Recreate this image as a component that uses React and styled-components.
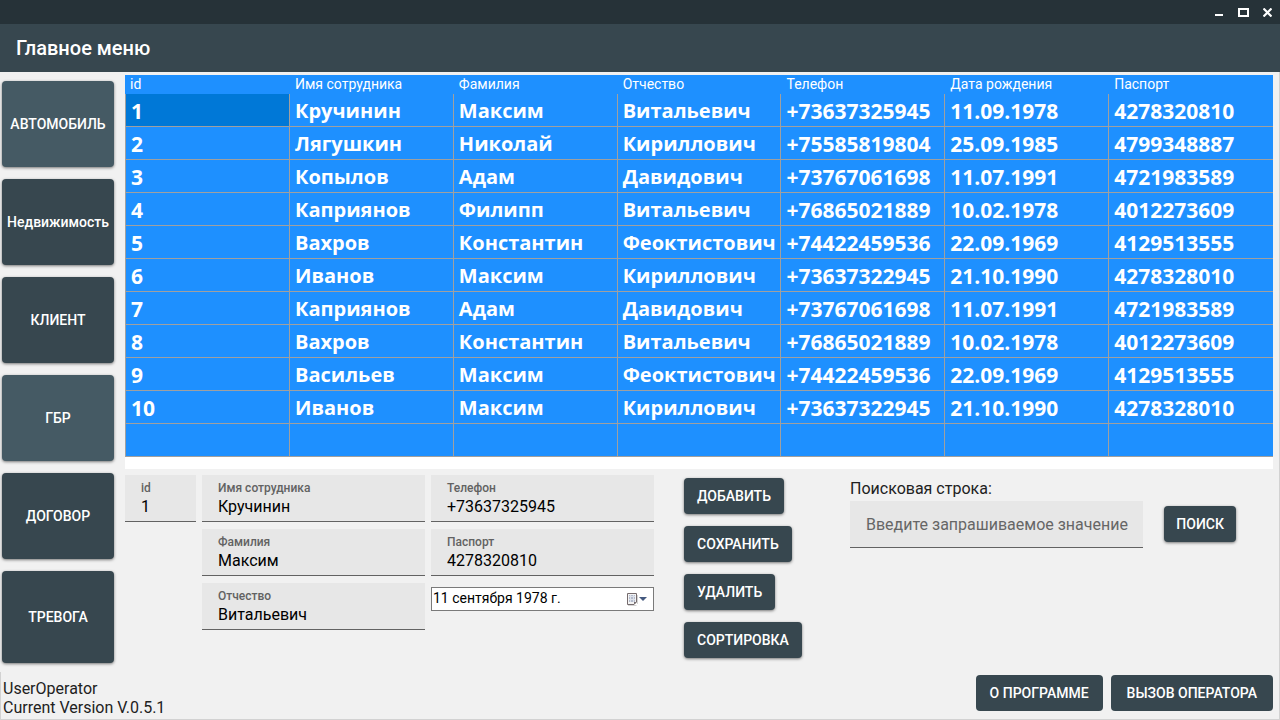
import React, { useState } from "react";
import styled, { createGlobalStyle } from "styled-components";

const GlobalStyle = createGlobalStyle`
  * { box-sizing: border-box; }
  body {
    margin: 0;
    background: #f1f1f1;
    color: #212121;
    font-family: Roboto, "Liberation Sans", sans-serif;
    font-size: 16px;
  }
  button, input { font-family: inherit; }
`;

const Window = styled.div`
  display: flex;
  flex-direction: column;
  min-height: 100vh;
  border-bottom: 1px solid #d2d2d2;
`;

const TitleBar = styled.div`
  display: flex;
  justify-content: flex-end;
  height: 24px;
  padding-right: 1px;
  background: #263238;
`;

const WindowButton = styled.button`
  display: flex;
  align-items: center;
  justify-content: center;
  width: 24px;
  height: 24px;
  padding: 0;
  border: 0;
  background: none;
  color: #fff;
`;

const AppBar = styled.header`
  display: flex;
  align-items: center;
  height: 48px;
  padding: 0 16px;
  background: #37474f;
`;

const Title = styled.h1`
  margin: 0;
  color: #fff;
  font-size: 20px;
  font-weight: 500;
  line-height: 24px;
`;

const Body = styled.div`
  display: flex;
  flex: 1;
  border-right: 1px solid #d2d2d2;
`;

const Sidebar = styled.nav`
  display: flex;
  flex-direction: column;
  flex: none;
  gap: 12px;
  width: 125px;
  padding: 9px 11px 0 2px;
`;

const Button = styled.button`
  height: 36px;
  padding: 0 ${(p) => p.$pad ?? 12}px;
  border: 0;
  border-radius: 4px;
  background: ${(p) => (p.$light ? "#455a64" : "#37474f")};
  box-shadow: ${(p) => (p.$flat ? "none" : "0 1px 3px rgba(0, 0, 0, 0.5)")};
  color: #fff;
  font-size: 14px;
  font-weight: 500;
  line-height: 20px;
  white-space: nowrap;
`;

const NavButton = styled(Button)`
  height: ${(p) => (p.$tall ? 92 : 86)}px;
  padding: 0;
`;

const Content = styled.main`
  flex: 1;
  min-width: 0;
  padding: 3px 6px 0 0;
`;

const TablePanel = styled.div`
  padding-bottom: 12px;
  background: #fff;
`;

const Table = styled.table`
  width: 100%;
  border-collapse: separate;
  border-spacing: 0;
  table-layout: fixed;
  background: #1e90ff;
  color: #fff;
`;

const HeadCell = styled.th`
  height: 19px;
  padding: 0 5px;
  font-size: 14px;
  font-weight: 400;
  line-height: 19px;
  text-align: left;

  &:first-child { width: 165px; }
`;

const Cell = styled.td`
  height: 33px;
  padding: 2px 0 0 5px;
  border: solid #a0a0a0;
  border-width: 0 1px 1px 0;
  background: ${(p) => (p.$selected ? "#0078d7" : "transparent")};
  font-family: "Open Sans", "Noto Sans", sans-serif;
  font-size: ${(p) => (p.$numeric ? 21 : 20)}px;
  font-weight: 700;
  line-height: 30px;
  white-space: nowrap;

  &:first-child { border-left-width: 1px; }
  &:last-child { border-right-width: 0; }
`;

const Lower = styled.div`
  display: grid;
  grid-template-columns: 529fr 136fr 423fr;
  column-gap: 30px;
  align-items: start;
  padding-top: 6px;
`;

const Form = styled.form`
  display: grid;
  grid-template-columns: 71px minmax(0, 1fr) minmax(0, 1fr);
  gap: 6px;
`;

const FormColumn = styled.div`
  display: flex;
  flex-direction: column;
  gap: 7px;
`;

const FieldBox = styled.div`
  display: flex;
  flex-direction: column;
  height: 47px;
  padding: 5px 0 0 16px;
  border-bottom: 1px solid #626262;
  background: #e7e7e7;
`;

const FieldLabel = styled.label`
  color: #626262;
  font-size: 12px;
  font-weight: 500;
  line-height: 16px;
`;

const FieldInput = styled.input`
  width: 100%;
  height: 20px;
  padding: 0;
  border: 0;
  outline: 0;
  background: none;
  color: #000;
  font-size: 16px;

  &::placeholder { color: #666; opacity: 1; }
`;

const DateBox = styled.div`
  display: flex;
  align-items: center;
  height: 24px;
  margin-top: 4px;
  padding: 0 6px 0 1px;
  border: 1px solid #7a7a7a;
  background: #fff;
`;

const DateInput = styled(FieldInput)`
  flex: 1;
  min-width: 0;
  height: 22px;
  padding-bottom: 2px;
  font-size: 14px;
`;

const DateButton = styled.button`
  display: flex;
  padding: 0;
  border: 0;
  background: none;
`;

const Actions = styled.div`
  display: flex;
  flex-direction: column;
  align-items: flex-start;
  gap: 12px;
  padding-top: 3px;
`;

const Search = styled.form`
  padding: 4px 37px 0 0;
`;

const SearchLabel = styled.label`
  display: block;
  padding-bottom: 2px;
  line-height: 20px;
`;

const SearchRow = styled.div`
  display: flex;
  align-items: flex-start;
  gap: 21px;
`;

const SearchBox = styled(FieldBox)`
  flex: 1;
  justify-content: center;
  min-width: 0;
  padding-top: 0;
`;

const SearchButton = styled(Button)`
  margin-top: 5px;
`;

const Footer = styled.footer`
  display: flex;
  align-items: flex-end;
  justify-content: space-between;
  padding: 3px 6px 2px 2px;
  border: solid #d2d2d2;
  border-width: 0 1px;
`;

const Version = styled.p`
  margin: 0;
  line-height: 19px;
`;

const FooterButtons = styled.div`
  display: flex;
  gap: 8px;
  padding-bottom: 6px;
`;

const navItems = [
  { label: "АВТОМОБИЛЬ", light: true },
  { label: "Недвижимость" },
  { label: "КЛИЕНТ" },
  { label: "ГБР", light: true },
  { label: "ДОГОВОР" },
  { label: "ТРЕВОГА", tall: true },
];

const columns = [
  { label: "id", numeric: true },
  { label: "Имя сотрудника" },
  { label: "Фамилия" },
  { label: "Отчество" },
  { label: "Телефон", numeric: true },
  { label: "Дата рождения", numeric: true },
  { label: "Паспорт", numeric: true },
];

const rows = [
  ["1", "Кручинин", "Максим", "Витальевич", "+73637325945", "11.09.1978", "4278320810"],
  ["2", "Лягушкин", "Николай", "Кириллович", "+75585819804", "25.09.1985", "4799348887"],
  ["3", "Копылов", "Адам", "Давидович", "+73767061698", "11.07.1991", "4721983589"],
  ["4", "Каприянов", "Филипп", "Витальевич", "+76865021889", "10.02.1978", "4012273609"],
  ["5", "Вахров", "Константин", "Феоктистович", "+74422459536", "22.09.1969", "4129513555"],
  ["6", "Иванов", "Максим", "Кириллович", "+73637322945", "21.10.1990", "4278328010"],
  ["7", "Каприянов", "Адам", "Давидович", "+73767061698", "11.07.1991", "4721983589"],
  ["8", "Вахров", "Константин", "Витальевич", "+76865021889", "10.02.1978", "4012273609"],
  ["9", "Васильев", "Максим", "Феоктистович", "+74422459536", "22.09.1969", "4129513555"],
  ["10", "Иванов", "Максим", "Кириллович", "+73637322945", "21.10.1990", "4278328010"],
  ["", "", "", "", "", "", ""],
];

function Field({ id, label, initial }) {
  const [value, setValue] = useState(initial);
  return (
    <FieldBox>
      <FieldLabel htmlFor={id}>{label}</FieldLabel>
      <FieldInput id={id} value={value} onChange={(e) => setValue(e.target.value)} />
    </FieldBox>
  );
}

function CalendarIcon() {
  return (
    <svg width="21" height="14" viewBox="0 0 21 14" aria-hidden="true">
      <path d="M2 13.5h8.5M11.500 3v9" stroke="#d4d4d4" fill="none" />
      <path d="M1.500 1.500h9v8.500l-2.500 2.500h-6.500z" fill="#f4f4f4" stroke="#756b6d" strokeLinejoin="round" />
      <path d="M3 3h6v7H3z" fill="#b4bccd" />
      <path d="M4.500 3v7M7.500 3v7M3 4.500h6M3 7.500h6" stroke="#dde1ea" fill="none" />
      <path d="M8 12.500V10h2.500z" fill="#756b6d" />
      <path d="M13 5h8l-4 4z" fill="#44597f" />
    </svg>
  );
}

export default function App() {
  const [date, setDate] = useState("11 сентября 1978 г.");
  const stop = (e) => e.preventDefault();
  return (
    <>
      <GlobalStyle />
      <Window>
        <TitleBar>
          <WindowButton aria-label="Свернуть">
            <svg width="10" height="10" shapeRendering="crispEdges">
              <path d="M1 7h8v2H1z" fill="currentColor" />
            </svg>
          </WindowButton>
          <WindowButton aria-label="Развернуть">
            <svg width="11" height="9" shapeRendering="crispEdges">
              <path d="M0 0h11v9H0zM2 2v5h7V2z" fill="currentColor" fillRule="evenodd" />
            </svg>
          </WindowButton>
          <WindowButton aria-label="Закрыть">
            <svg width="9" height="9" viewBox="0 0 9 9">
              <path d="M0.500 0.500l8 8M8.500 0.500l-8 8" stroke="currentColor" strokeWidth="2.200" />
            </svg>
          </WindowButton>
        </TitleBar>
        <AppBar>
          <Title>Главное меню</Title>
        </AppBar>
        <Body>
          <Sidebar>
            {navItems.map((item) => (
              <NavButton key={item.label} $light={item.light} $tall={item.tall}>
                {item.label}
              </NavButton>
            ))}
          </Sidebar>
          <Content>
            <TablePanel>
              <Table>
                <thead>
                  <tr>
                    {columns.map((c) => (
                      <HeadCell key={c.label} scope="col">{c.label}</HeadCell>
                    ))}
                  </tr>
                </thead>
                <tbody>
                  {rows.map((row, r) => (
                    <tr key={r}>
                      {row.map((text, c) => (
                        <Cell key={c} $numeric={columns[c].numeric} $selected={r === 0 && c === 0}>
                          {text}
                        </Cell>
                      ))}
                    </tr>
                  ))}
                </tbody>
              </Table>
            </TablePanel>
            <Lower>
              <Form onSubmit={stop}>
                <FormColumn>
                  <Field id="emp-id" label="id" initial="1" />
                </FormColumn>
                <FormColumn>
                  <Field id="emp-name" label="Имя сотрудника" initial="Кручинин" />
                  <Field id="emp-surname" label="Фамилия" initial="Максим" />
                  <Field id="emp-patronymic" label="Отчество" initial="Витальевич" />
                </FormColumn>
                <FormColumn>
                  <Field id="emp-phone" label="Телефон" initial="+73637325945" />
                  <Field id="emp-passport" label="Паспорт" initial="4278320810" />
                  <DateBox>
                    <DateInput
                      aria-label="Дата рождения"
                      value={date}
                      onChange={(e) => setDate(e.target.value)}
                    />
                    <DateButton type="button" aria-label="Открыть календарь">
                      <CalendarIcon />
                    </DateButton>
                  </DateBox>
                </FormColumn>
              </Form>
              <Actions>
                <Button $pad={13}>ДОБАВИТЬ</Button>
                <Button $pad={13}>СОХРАНИТЬ</Button>
                <Button $pad={13}>УДАЛИТЬ</Button>
                <Button $pad={13}>СОРТИРОВКА</Button>
              </Actions>
              <Search onSubmit={stop}>
                <SearchLabel htmlFor="search">Поисковая строка:</SearchLabel>
                <SearchRow>
                  <SearchBox>
                    <FieldInput id="search" placeholder="Введите запрашиваемое значение" />
                  </SearchBox>
                  <SearchButton>ПОИСК</SearchButton>
                </SearchRow>
              </Search>
            </Lower>
          </Content>
        </Body>
        <Footer>
          <div>
            <Version>UserOperator</Version>
            <Version>Current Version V.0.5.1</Version>
          </div>
          <FooterButtons>
            <Button $flat $pad={14}>О ПРОГРАММЕ</Button>
            <Button $flat $pad={16}>ВЫЗОВ ОПЕРАТОРА</Button>
          </FooterButtons>
        </Footer>
      </Window>
    </>
  );
}
